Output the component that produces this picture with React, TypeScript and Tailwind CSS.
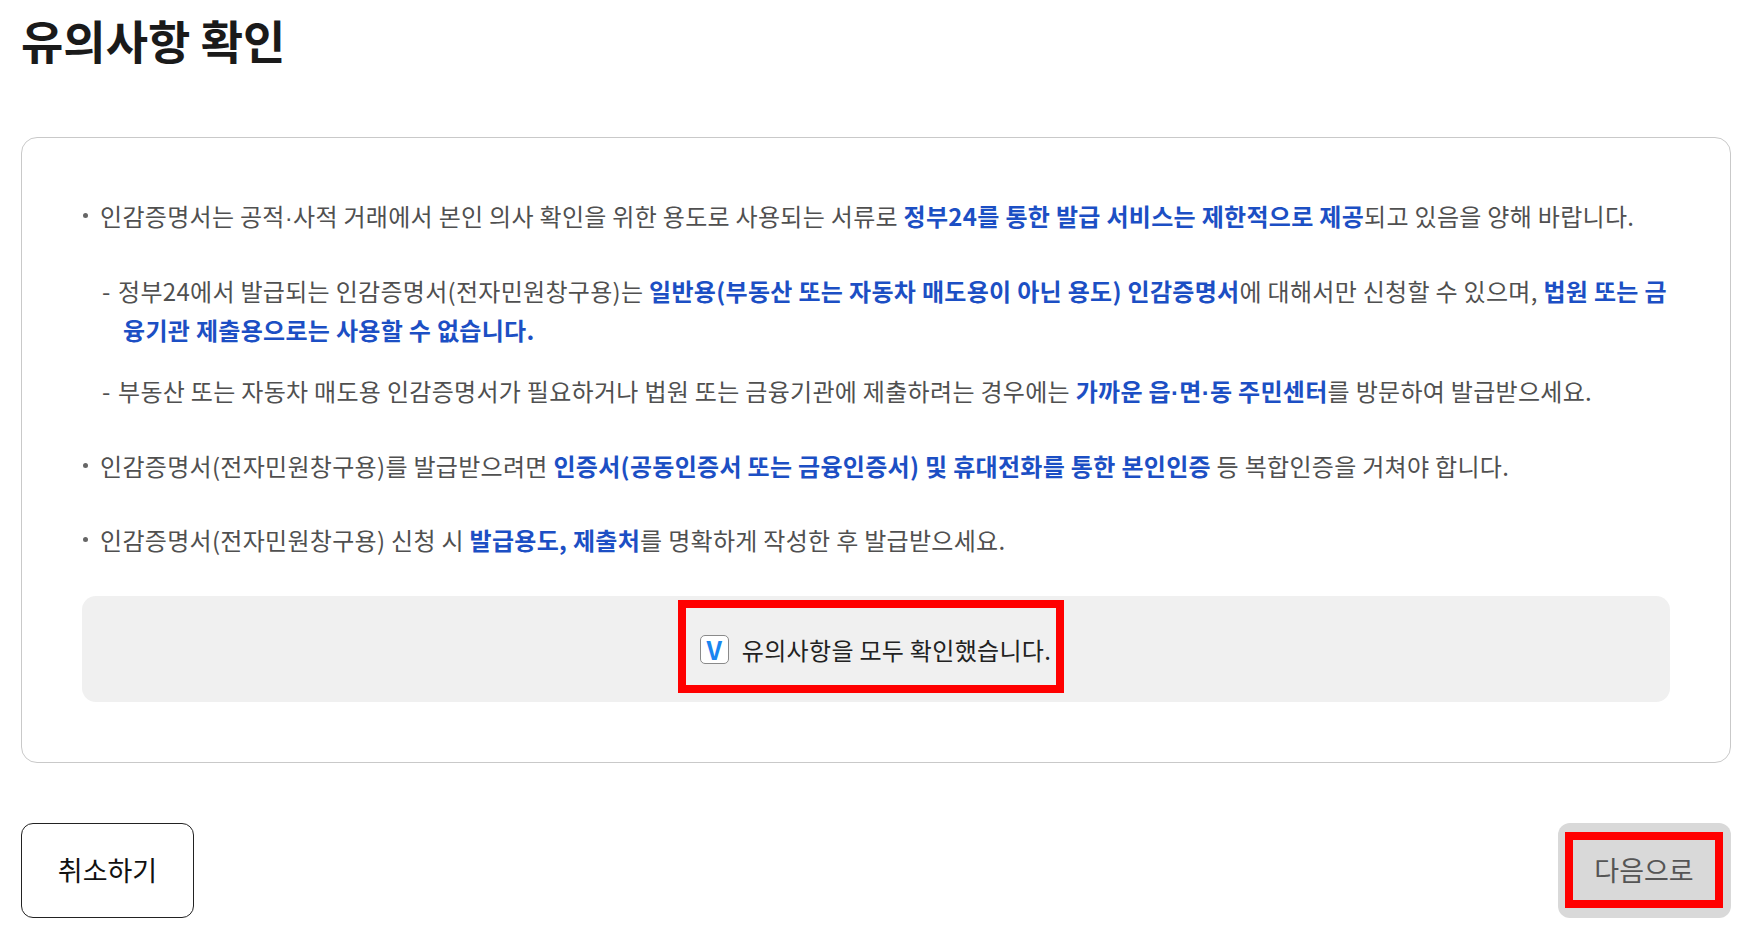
import React from "react";

const B = ({ children }: { children: React.ReactNode }) => (
  <span className="font-bold text-[#1c4fc4]">{children}</span>
);

const Dot = () => <span style={{ fontFamily: '"Liberation Sans", sans-serif' }}>·</span>;

function Bullet({ children, className = "" }: { children: React.ReactNode; className?: string }) {
  return (
    <div className={"relative pl-[18px] " + className}>
      <span className="absolute left-[1px] top-[17px] h-[5px] w-[5px] rounded-full bg-[#666]" />
      {children}
    </div>
  );
}

function Dash({ children, className = "" }: { children: React.ReactNode; className?: string }) {
  return (
    <div className={"pl-[41px] -indent-[21px] " + className}>
      <span className="inline-block w-[16px] indent-0">-</span>
      {children}
    </div>
  );
}

export default function App() {
  return (
    <div
      className="min-h-[943px] w-[1748px] bg-white pl-[21px] pt-[9px] text-[#505050]"
      style={{ fontFamily: '"Noto Sans CJK KR", "Noto Sans", sans-serif' }}
    >
      <h1 className="text-[46px] font-bold leading-[60px] text-[#1a1a1a]">유의사항 확인</h1>

      <div className="mt-[68px] w-[1710px] rounded-[16px] border border-[#c9c9c9] px-[60px] pb-[60px] pt-[58px]">
        <div className="text-[24px] leading-[39px] tracking-[0.3px]">
          <Bullet>
            인감증명서는 공적<Dot />사적 거래에서 본인 의사 확인을 위한 용도로 사용되는 서류로{" "}
            <B>정부24를 통한 발급 서비스는 제한적으로 제공</B>되고 있음을 양해 바랍니다.
          </Bullet>
          <Dash className="mt-[34px]">
            정부24에서 발급되는 인감증명서(전자민원창구용)는{" "}
            <B>일반용(부동산 또는 자동차 매도용이 아닌 용도) 인감증명서</B>에 대해서만 신청할 수 있으며,{" "}
            <B>법원 또는 금</B>
            <B>융기관 제출용으로는 사용할 수 없습니다.</B>
          </Dash>
          <Dash className="mt-[22px]">
            부동산 또는 자동차 매도용 인감증명서가 필요하거나 법원 또는 금융기관에 제출하려는 경우에는{" "}
            <B>
              가까운 읍<Dot />면<Dot />동 주민센터
            </B>
            를 방문하여 발급받으세요.
          </Dash>
          <Bullet className="mt-[34px]">
            인감증명서(전자민원창구용)를 발급받으려면{" "}
            <B>인증서(공동인증서 또는 금융인증서) 및 휴대전화를 통한 본인인증</B> 등 복합인증을 거쳐야 합니다.
          </Bullet>
          <Bullet className="mt-[35px]">
            인감증명서(전자민원창구용) 신청 시 <B>발급용도, 제출처</B>를 명확하게 작성한 후 발급받으세요.
          </Bullet>
        </div>

        <div className="mt-[37px] flex h-[106px] items-start justify-center rounded-[14px] bg-[#f0f0f0] pr-[10px] pt-[4px]">
          <label className="flex h-[93px] items-center gap-[13px] border-[8px] border-[#ff0000] pl-[14px] pr-[5px] pt-[6px]">
            <span className="flex h-[29px] w-[29px] items-center justify-center rounded-[5px] border border-[#8a8a8a] bg-white text-[25px] font-bold leading-none text-[#1a86f0]">
              V
            </span>
            <span className="text-[24px] leading-[30px] tracking-[0.3px] text-[#222]">유의사항을 모두 확인했습니다.</span>
          </label>
        </div>
      </div>

      <div className="mt-[60px] flex w-[1710px] items-start justify-between">
        <button className="flex h-[95px] w-[173px] items-center justify-center rounded-[12px] border border-[#222] bg-white text-[27px] text-[#111]">
          취소하기
        </button>
        <button className="flex h-[95px] w-[173px] items-center justify-center rounded-[12px] bg-[#d9d9d9] p-[9px_8px_10px_7px]">
          <span className="flex h-full w-full items-center justify-center border-[8px] border-[#ff0000] text-[27px] text-[#555]">
            다음으로
          </span>
        </button>
      </div>
    </div>
  );
}
